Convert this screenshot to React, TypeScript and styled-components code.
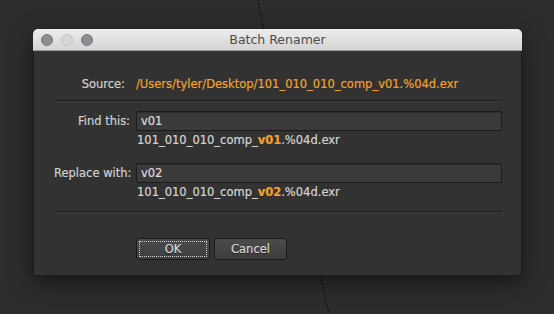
import styled, { createGlobalStyle } from 'styled-components'

const Global = createGlobalStyle`
  html, body {
    margin: 0;
    padding: 0;
    background: #2d2d2d;
  }
  * {
    box-sizing: border-box;
  }
`

const Stage = styled.div`
  position: relative;
  width: 554px;
  height: 314px;
  overflow: hidden;
  padding: 29px 0 0 33px;
  background: #2d2d2d;
  font-family: 'DejaVu Sans', 'Liberation Sans', sans-serif;
`

const Wire = styled.svg`
  position: absolute;
  left: 0;
  top: 0;
  width: 554px;
  height: 314px;
`

const Window = styled.div`
  position: relative;
  width: 489px;
  border-radius: 5px 5px 0 0;
  box-shadow: 0 6px 22px rgba(0, 0, 0, 0.55);
`

const TitleBar = styled.div`
  position: relative;
  height: 22px;
  border-radius: 5px 5px 0 0;
  background: linear-gradient(#ededed, #d4d4d4);
  border-bottom: 1px solid #9c9c9c;
  display: flex;
  align-items: center;
  justify-content: center;
`

const Lights = styled.div`
  position: absolute;
  left: 8px;
  top: 5px;
  display: flex;
  gap: 8px;
`

const Light = styled.span<{ $dim?: boolean }>`
  width: 12px;
  height: 12px;
  border-radius: 50%;
  background: ${(p) => (p.$dim ? '#d6d6d6' : '#8d8d92')};
  border: 1px solid ${(p) => (p.$dim ? '#c2c2c2' : '#7a7a7f')};
`

const Title = styled.span`
  font-size: 12.5px;
  color: #4b4b4b;
  font-family: 'DejaVu Sans', sans-serif;
`

const Body = styled.div`
  height: 225px;
  background: #323232;
  border: 1px solid #1c1c1c;
  border-top: none;
  padding: 21px 19px 0 20px;
  -webkit-text-stroke: 0.2px;
`

const Grid = styled.div`
  display: grid;
  grid-template-columns: 76px 366px;
  column-gap: 6px;
  align-items: center;
`

const Label = styled.div<{ $pad?: number }>`
  text-align: right;
  white-space: nowrap;
  font-size: 11.5px;
  color: #d0d0d0;
  padding-right: ${(p) => p.$pad ?? 0}px;
`

const Path = styled.div`
  font-size: 11.5px;
  color: #f3a12a;
  line-height: 24px;
  white-space: nowrap;
`

const Separator = styled.div<{ $top: number; $bottom: number }>`
  grid-column: 1 / 3;
  height: 1px;
  background: #1e1e1e;
  box-shadow: 0 1px 0 #3a3a3a;
  margin: ${(p) => p.$top}px 0 ${(p) => p.$bottom}px;
`

const Field = styled.div`
  height: 20px;
  background: #3a3a3a;
  border: 1px solid #1c1c1c;
  border-radius: 2px;
  box-shadow: inset 0 1px 0 #2c2c2c;
  font-size: 11.5px;
  color: #dcdcdc;
  padding: 0 4px;
  display: flex;
  align-items: center;
`

const Preview = styled.div`
  grid-column: 2;
  font-size: 11.5px;
  color: #d4d4d4;
  padding-left: 1px;
  line-height: 18px;
  margin-bottom: 14px;
  white-space: nowrap;
`

const Hit = styled.span`
  color: #f3a12a;
  font-weight: bold;
`

const Buttons = styled.div`
  grid-column: 2;
  display: flex;
  gap: 4px;
  margin-top: 23px;
`

const Button = styled.button<{ $w: number; $focus?: boolean }>`
  position: relative;
  width: ${(p) => p.$w}px;
  height: 22px;
  border: 1px solid #1a1a1a;
  border-radius: 3px;
  background: linear-gradient(#4b4b4b, #3d3d3d);
  color: #d8d8d8;
  font-family: 'DejaVu Sans', sans-serif;
  font-size: 11.5px;
  text-shadow: 0 1px 0 #222;
  padding: 0;

  &::after {
    content: '';
    display: ${(p) => (p.$focus ? 'block' : 'none')};
    position: absolute;
    inset: 2px;
    border: 1px dotted #d0d0d0;
  }
`

export default function App() {
  return (
    <>
      <Global />
      <Stage>
        <Wire viewBox="0 0 554 314">
          <path
            d="M258 0 C 268 60, 312 240, 329 314"
            fill="none"
            stroke="#0c0c0c"
            strokeWidth="1.3"
            strokeDasharray="1.5 2"
          />
        </Wire>
        <Window>
          <TitleBar>
            <Lights>
              <Light />
              <Light $dim />
              <Light />
            </Lights>
            <Title>Batch Renamer</Title>
          </TitleBar>
          <Body>
            <Grid>
              <Label $pad={5}>Source:</Label>
              <Path>/Users/tyler/Desktop/101_010_010_comp_v01.%04d.exr</Path>
              <Separator $top={4} $bottom={10} />

              <Label>Find this:</Label>
              <Field>v01</Field>
              <Preview>
                101_010_010_comp_<Hit>v01</Hit>.%04d.exr
              </Preview>

              <Label>Replace with:</Label>
              <Field>v02</Field>
              <Preview>
                101_010_010_comp_<Hit>v02</Hit>.%04d.exr
              </Preview>

              <Separator $top={-7} $bottom={0} />

              <Buttons>
                <Button $w={74} $focus>
                  OK
                </Button>
                <Button $w={73}>Cancel</Button>
              </Buttons>
            </Grid>
          </Body>
        </Window>
      </Stage>
    </>
  )
}
